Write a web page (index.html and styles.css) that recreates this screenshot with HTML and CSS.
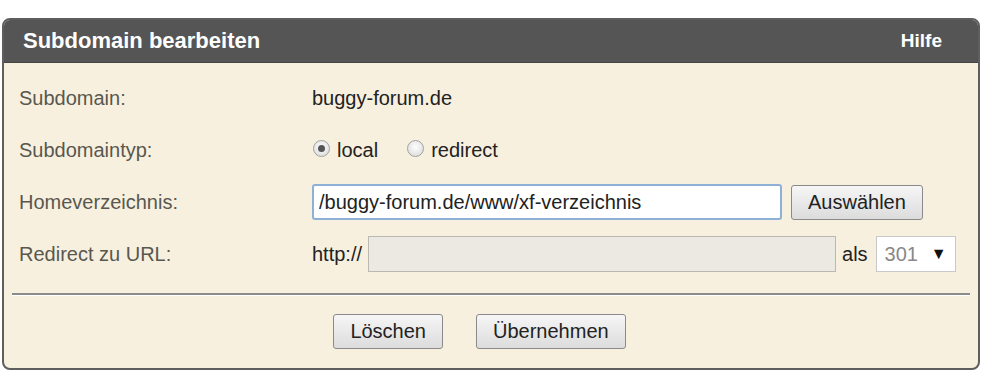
FILE: index.html
```html
<!DOCTYPE html>
<html>
<head lang="de">
    <meta charset="UTF-8">
    <title>Subdomain bearbeiten</title>
    <link rel="stylesheet" href="styles.css">
</head>
<body>
<div class="panel">
    <div class="panel-head">
        <span class="title">Subdomain bearbeiten</span>
        <a class="help">Hilfe</a>
    </div>
    <div class="panel-body">
        <div class="row">
            <label class="lbl">Subdomain:</label>
            <div class="val">buggy-forum.de</div>
        </div>
        <div class="row">
            <label class="lbl">Subdomaintyp:</label>
            <div class="val">
                <span class="radio on"></span><span class="opt">local</span>
                <span class="radio"></span><span class="opt">redirect</span>
            </div>
        </div>
        <div class="row">
            <label class="lbl">Homeverzeichnis:</label>
            <div class="val">
                <input class="txt home" type="text" value="/buggy-forum.de/www/xf-verzeichnis"/>
                <button class="btn choose">Auswählen</button>
            </div>
        </div>
        <div class="row">
            <label class="lbl">Redirect zu URL:</label>
            <div class="val">
                <span class="proto">http://</span>
                <input class="txt url" type="text" disabled/>
                <span class="als">als</span>
                <span class="sel">301<span class="arrow">&#9660;</span></span>
            </div>
        </div>
        <div class="sep"></div>
        <div class="actions">
            <button class="btn">Löschen</button>
            <button class="btn">Übernehmen</button>
        </div>
    </div>
</div>
</body>
</html>
```
FILE: styles.css
```css
*{
    margin:0;
    padding:0;
    box-sizing:border-box;
}
body{
    background:#fff;
    font-family:"Liberation Sans", Arial, sans-serif;
    font-size:20px;
    color:#222;
}
.panel{
    width:978px;
    margin:18px 0 0 2px;
    border:2px solid #5e5e5e;
    border-radius:8px;
    background:#f8f0df;
    overflow:hidden;
}
.panel-head{
    height:43px;
    background:#555555;
    color:#fff;
    display:flex;
    align-items:center;
    justify-content:space-between;
    padding:0 36px 0 19px;
    border-bottom:1px solid #444;
}
.title{
    font-weight:bold;
    font-size:22px;
}
.help{
    font-weight:bold;
    font-size:19px;
}
.panel-body{
    padding:9px 8px 19px 8px;
}
.row{
    display:grid;
    grid-template-columns:300px 1fr;
    align-items:center;
    height:52px;
}
.lbl{
    color:#58584f;
    padding-left:7px;
}
.val{
    display:flex;
    align-items:center;
}
.radio{
    width:17px;
    height:17px;
    border-radius:50%;
    border:1px solid #a0a0a0;
    background:radial-gradient(circle at 50% 40%, #fdfdfd, #d8d8d8);
    margin:0 7px 4px 1px;
    position:relative;
}
.radio.on:after{
    content:"";
    position:absolute;
    left:4px;
    top:4px;
    width:7px;
    height:7px;
    border-radius:50%;
    background:#555;
}
.opt{
    margin-right:28px;
}
.txt{
    height:36px;
    font-family:"Liberation Sans", Arial, sans-serif;
    font-size:20px;
    color:#222;
    padding:0 5px;
}
.home{
    width:470px;
    border:2px solid #8fb0d6;
    border-radius:3px;
    background:#fff;
}
.btn{
    height:35px;
    font-family:"Liberation Sans", Arial, sans-serif;
    font-size:20px;
    color:#222;
    padding:0 16px;
    border:1px solid #8a8a8a;
    border-radius:3px;
    background:linear-gradient(#f6f6f6, #dcdcdc);
}
.choose{
    margin-left:9px;
}
.proto{
    margin-right:6px;
}
.url{
    width:468px;
    border:1px solid #b9b9b1;
    background:#ebe9e2;
}
.als{
    margin:0 8px 0 6px;
}
.sel{
    width:80px;
    height:36px;
    border:1px solid #c9c9c9;
    background:#fff;
    color:#888;
    display:flex;
    align-items:center;
    justify-content:space-between;
    padding:0 8px;
}
.arrow{
    color:#111;
    font-size:16px;
}
.sep{
    margin:13px 0 0 0;
    border-top:2px solid #8b8b8b;
    border-bottom:1px solid #fff;
}
.actions{
    display:flex;
    justify-content:center;
    gap:33px;
    padding:18px 0 0 0;
    margin-left:-23px;
}
```
